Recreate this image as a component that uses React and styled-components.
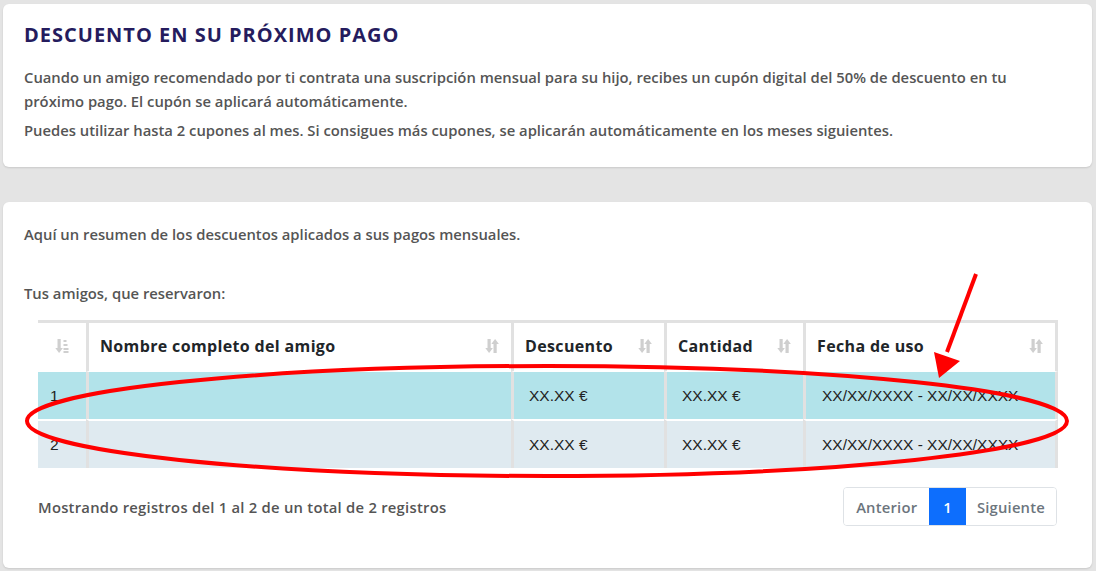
import React from "react";
import styled, { createGlobalStyle } from "styled-components";

const GlobalStyle = createGlobalStyle`
    body {
        margin: 0;
        background: #e4e4e4;
        font-family: "Open Sans", "Noto Sans", sans-serif;
    }
`;

const Page = styled.div`
    position: relative;
    width: 1096px;
    height: 571px;
    box-sizing: border-box;
    padding: 4px 4px 3px 3px;
    display: flex;
    flex-direction: column;
    gap: 35px;
    overflow: hidden;
`;

const Card = styled.section`
    background: #fff;
    border-radius: 6px;
    box-shadow: 0 1px 2px rgba(0, 0, 0, 0.12);
    padding: ${(p) => p.$pad};
    flex: ${(p) => (p.$grow ? 1 : "none")};
    display: flex;
    flex-direction: column;
`;

const Title = styled.h1`
    margin: 0 0 18px;
    font-size: 20px;
    line-height: 24px;
    font-weight: 700;
    letter-spacing: 1px;
    color: #251c5e;
`;

const Text = styled.p`
    margin: 0 0 ${(p) => p.$gap || 0}px;
    max-width: 1030px;
    font-size: 14.8px;
    line-height: 24px;
    font-weight: 600;
    color: #555;
`;

const Inner = styled.div`
    padding: 0 10px 0 14px;
`;

const Table = styled.table`
    width: 1020px;
    table-layout: fixed;
    border-collapse: separate;
    border-spacing: 0;
`;

const Th = styled.th`
    box-sizing: border-box;
    width: ${(p) => p.$w}px;
    height: 51px;
    padding: 0 12px 0 11px;
    border-top: 3px solid #e1e1e1;
    border-left: ${(p) => (p.$first ? "none" : "3px solid #e1e1e1")};
    border-right: ${(p) => (p.$last ? "3px solid #e1e1e1" : "none")};
    text-align: left;
    font-size: 16px;
    font-weight: 700;
    letter-spacing: 0.35px;
    color: #212529;
`;

const HeadInner = styled.div`
    display: flex;
    align-items: center;
    justify-content: ${(p) => (p.$center ? "center" : "space-between")};
    padding-bottom: 3px;
`;

const Tr = styled.tr`
    background: ${(p) => p.$bg};
`;

const Td = styled.td`
    height: 47px;
    padding: 0 0 0 ${(p) => p.$pl || 15}px;
    border-top: ${(p) => (p.$gapTop ? "2px solid #fff" : "1px solid #fff")};
    border-left: ${(p) => (p.$first ? "none" : "3px solid #e1e1e1")};
    border-right: ${(p) => (p.$last ? "3px solid #e1e1e1" : "none")};
    font-family: "Liberation Sans", Arial, sans-serif;
    font-size: 15.5px;
    color: #222;
    vertical-align: middle;
`;

const Footer = styled.div`
    display: flex;
    justify-content: space-between;
    align-items: center;
    margin-top: 19px;
`;

const Info = styled.span`
    font-size: 14.8px;
    font-weight: 600;
    letter-spacing: 0.25px;
    color: #555;
`;

const Pager = styled.div`
    display: flex;
    height: 37px;
    border: 1px solid #dee2e6;
    border-radius: 4px;
    overflow: hidden;
    margin-right: 1px;
`;

const PageBtn = styled.button`
    border: none;
    margin: 0;
    padding: 0 ${(p) => p.$px}px;
    background: ${(p) => (p.$active ? "#0d6efd" : "#fff")};
    color: ${(p) => (p.$active ? "#fff" : "#6c757d")};
    font-family: "Open Sans", "Noto Sans", sans-serif;
    font-size: 14.8px;
    font-weight: 600;
    letter-spacing: 0.2px;
`;

const Overlay = styled.svg`
    position: absolute;
    left: 0;
    top: 0;
    pointer-events: none;
`;

const SortIcon = () => (
    <svg width="14" height="16" viewBox="0 0 14 16" fill="#cfcfcf">
        <rect x="2.5" y="1" width="3.2" height="10" />
        <polygon points="0.3,10 7.9,10 4.1,15" />
        <rect x="8.5" y="5" width="3.2" height="10" />
        <polygon points="6.3,6 13.9,6 10.1,1" />
    </svg>
);

const SortAmountIcon = () => (
    <svg width="14" height="16" viewBox="0 0 14 16" fill="#cfcfcf">
        <rect x="2.5" y="1" width="3.2" height="10" />
        <polygon points="0.3,10 7.9,10 4.1,15" />
        <rect x="8.5" y="2" width="3" height="2" />
        <rect x="8.5" y="6" width="4" height="2" />
        <rect x="8.5" y="10" width="5" height="2" />
        <rect x="8.5" y="13" width="5" height="2" />
    </svg>
);

const columns = [
    { label: "", w: 48 },
    { label: "Nombre completo del amigo", w: 425 },
    { label: "Descuento", w: 153 },
    { label: "Cantidad", w: 139 },
    { label: "Fecha de uso", w: 255 },
];

const rows = [
    { n: 1, bg: "#b2e3ea" },
    { n: 2, bg: "#dfeaf0" },
];

export default function App() {
    return (
        <>
            <GlobalStyle />
            <Page>
                <Card $pad="19px 21px 25px 21px">
                    <Title>DESCUENTO EN SU PRÓXIMO PAGO</Title>
                    <Text $gap={5}>
                        Cuando un amigo recomendado por ti contrata una suscripción mensual para su hijo, recibes un
                        cupón digital del 50% de descuento en tu próximo pago. El cupón se aplicará automáticamente.
                    </Text>
                    <Text>
                        Puedes utilizar hasta 2 cupones al mes. Si consigues más cupones, se aplicarán automáticamente
                        en los meses siguientes.
                    </Text>
                </Card>
                <Card $grow $pad="20px 24px 0 21px">
                    <Text $gap={35}>Aquí un resumen de los descuentos aplicados a sus pagos mensuales.</Text>
                    <Text $gap={15}>Tus amigos, que reservaron:</Text>
                    <Inner>
                        <Table>
                            <thead>
                                <tr>
                                    {columns.map((c, i) => (
                                        <Th key={i} $w={c.w} $first={i === 0} $last={i === columns.length - 1}>
                                            {i === 0 ? (
                                                <HeadInner $center>
                                                    <SortAmountIcon />
                                                </HeadInner>
                                            ) : (
                                                <HeadInner>
                                                    <span>{c.label}</span>
                                                    <SortIcon />
                                                </HeadInner>
                                            )}
                                        </Th>
                                    ))}
                                </tr>
                            </thead>
                            <tbody>
                                {rows.map((r, i) => (
                                    <Tr key={r.n} $bg={r.bg}>
                                        <Td $first $pl={12} $gapTop={i > 0}>
                                            {r.n}
                                        </Td>
                                        <Td $gapTop={i > 0}></Td>
                                        <Td $gapTop={i > 0}>XX.XX €</Td>
                                        <Td $gapTop={i > 0}>XX.XX €</Td>
                                        <Td $last $pl={16} $gapTop={i > 0}>
                                            XX/XX/XXXX - XX/XX/XXXX
                                        </Td>
                                    </Tr>
                                ))}
                            </tbody>
                        </Table>
                        <Footer>
                            <Info>Mostrando registros del 1 al 2 de un total de 2 registros</Info>
                            <Pager>
                                <PageBtn $px={12}>Anterior</PageBtn>
                                <PageBtn $px={14} $active>
                                    1
                                </PageBtn>
                                <PageBtn $px={11}>Siguiente</PageBtn>
                            </Pager>
                        </Footer>
                    </Inner>
                </Card>
                <Overlay width="1096" height="571" viewBox="0 0 1096 571">
                    <ellipse cx="547" cy="421" rx="520" ry="55" fill="none" stroke="#ff0000" strokeWidth="4" />
                    <line x1="976" y1="274" x2="947" y2="352" stroke="#ff0000" strokeWidth="4" />
                    <polygon points="934,352 960,361 939,378" fill="#ff0000" />
                </Overlay>
            </Page>
        </>
    );
}
